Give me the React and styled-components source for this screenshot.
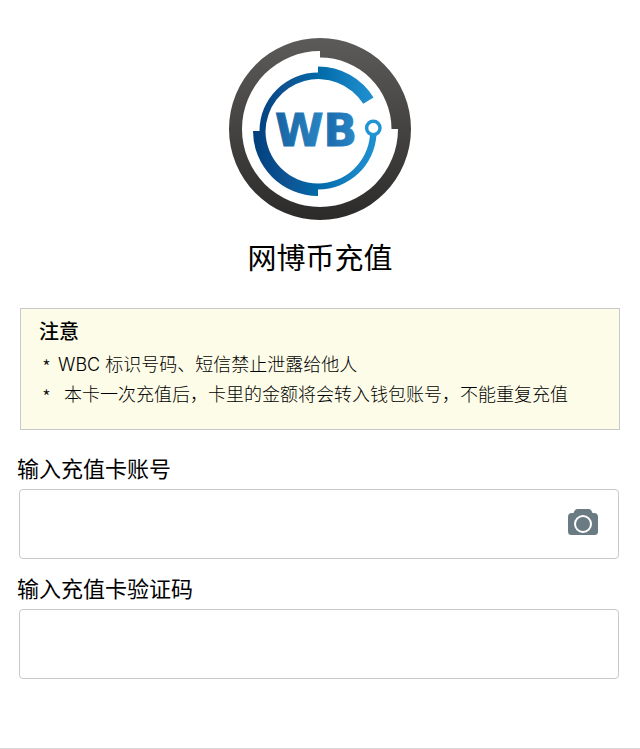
import React from "react";
import styled, { createGlobalStyle } from "styled-components";

const GlobalStyle = createGlobalStyle`
  *, *::before, *::after { box-sizing: border-box; }
  body {
    margin: 0;
    background: #fff;
    color: #000;
    font-family: "Noto Sans CJK SC", sans-serif;
  }
`;

const Page = styled.main`
  display: flex;
  flex-direction: column;
  padding: 38px 0 0;
  min-height: 100vh;
  border-bottom: 1px solid #d9d9d9;
`;

const Header = styled.header`
  display: flex;
  flex-direction: column;
  align-items: center;
  gap: 16px;
`;

const Title = styled.h1`
  margin: 0;
  font-size: 29px;
  line-height: 40px;
  font-weight: 400;
`;

const Notice = styled.section`
  margin: 32px 20px 0;
  padding: 7px 18px 19px;
  background: #fdfce8;
  border: 1px solid #c8c8c8;
`;

const NoticeTitle = styled.h2`
  margin: 0;
  font-size: 20px;
  line-height: 30px;
  font-weight: 500;
`;

const NoticeList = styled.ul`
  margin: 4px 0 0;
  padding: 0 0 0 3px;
  list-style: none;
  font-family: Inter, "Noto Sans CJK SC", sans-serif;
  font-size: 18px;
  line-height: 30px;
  font-weight: 300;
`;

const NoticeItem = styled.li`
  display: flex;
  align-items: flex-start;
  min-height: 30px;
  gap: ${(p) => (p.$wide ? 10 : 4)}px;
`;

const Bullet = styled.span`
  width: 12px;
  height: 30px;
  font-family: "Noto Sans CJK SC", sans-serif;
  font-size: 20px;
  line-height: 34px;
`;

const Form = styled.form`
  display: flex;
  flex-direction: column;
  gap: 13px;
  padding: 22px 21px 60px 19px;
`;

const Field = styled.div`
  display: flex;
  flex-direction: column;
  gap: 7px;
`;

const Label = styled.label`
  margin-left: -2px;
  font-size: 22px;
  line-height: 30px;
`;

const InputBox = styled.div`
  display: flex;
  align-items: center;
  height: 70px;
  background: #fff;
  border: 1px solid #c9c9c9;
  border-radius: 4px;
`;

const Input = styled.input`
  flex: 1;
  min-width: 0;
  height: 100%;
  padding: 0 20px;
  border: 0;
  outline: 0;
  background: transparent;
  font: inherit;
  font-size: 22px;
`;

const CameraButton = styled.button`
  display: flex;
  padding: 0 20px 4px;
  border: 0;
  background: transparent;
  cursor: pointer;
`;

function Logo() {
  return (
    <svg width="182" height="182" viewBox="0 0 182 182" role="img" aria-label="WB">
      <defs>
        <linearGradient id="rim" x1="0" y1="0" x2="0" y2="1">
          <stop offset="0" stopColor="#5c5b5a" />
          <stop offset="1" stopColor="#2c2b2a" />
        </linearGradient>
        <linearGradient id="orbit" gradientUnits="userSpaceOnUse" x1="24" y1="0" x2="153" y2="0">
          <stop offset="0" stopColor="#003f7d" />
          <stop offset="0.27" stopColor="#0f5494" />
          <stop offset="0.5" stopColor="#0069a8" />
          <stop offset="0.85" stopColor="#1c8aca" />
          <stop offset="1" stopColor="#2094d4" />
        </linearGradient>
        <linearGradient id="mark" gradientUnits="userSpaceOnUse" x1="45" y1="0" x2="130" y2="0">
          <stop offset="0" stopColor="#1762a2" />
          <stop offset="0.6" stopColor="#2b87c4" />
          <stop offset="0.66" stopColor="#1c6cae" />
          <stop offset="1" stopColor="#2b8bc9" />
        </linearGradient>
      </defs>
      <path
        fill="url(#rim)"
        fillRule="evenodd"
        d="M91 0a91 91 0 1 1 0 182a91 91 0 1 1 0-182z M91 13A78 78 0 1 0 169 91H162.500A71.500 71.500 0 0 0 91 19.500z"
      />
      <g fill="url(#orbit)">
        <path d="M89 28.500A65 65 0 0 1 144.500 59.500L134.300 65.800A53 53 0 0 0 36.500 93A52.500 52.500 0 0 0 89 145.500A52.500 52.500 0 0 0 141 97H147.500A58.500 58.500 0 0 1 89 151.500V158A65 65 0 0 1 24 93H30.500A58.500 58.500 0 0 1 89 34.500z" />
      </g>
      <circle cx="144.300" cy="90" r="6.700" fill="#fff" stroke="#2094d4" strokeWidth="3.400" />
      <text
        x="87"
        y="108"
        textAnchor="middle"
        fill="url(#mark)"
        stroke="url(#mark)"
        strokeWidth="1"
        fontFamily="DejaVu Sans, sans-serif"
        fontWeight="700"
        fontSize="44"
      >
        WB
      </text>
    </svg>
  );
}

function CameraIcon() {
  return (
    <svg width="30" height="26" viewBox="0 0 30 26" aria-hidden="true">
      <path
        fill="#6b7b83"
        d="M9 0H21Q22.500 0 23.300 1.500L24.500 4H26Q30 4 30 8V22.500Q30 26 26.500 26H3.500Q0 26 0 22.500V8Q0 4 4 4H5.500L6.700 1.500Q7.500 0 9 0z"
      />
      <circle cx="15" cy="15" r="8" fill="none" stroke="#fff" strokeWidth="2" />
    </svg>
  );
}

export default function App() {
  return (
    <>
      <GlobalStyle />
      <Page>
        <Header>
          <Logo />
          <Title>网博币充值</Title>
        </Header>
        <Notice>
          <NoticeTitle>注意</NoticeTitle>
          <NoticeList>
            <NoticeItem>
              <Bullet>*</Bullet>
              <span>WBC 标识号码、短信禁止泄露给他人</span>
            </NoticeItem>
            <NoticeItem $wide>
              <Bullet>*</Bullet>
              <span>本卡一次充值后，卡里的金额将会转入钱包账号，不能重复充值</span>
            </NoticeItem>
          </NoticeList>
        </Notice>
        <Form onSubmit={(e) => e.preventDefault()}>
          <Field>
            <Label htmlFor="card-number">输入充值卡账号</Label>
            <InputBox>
              <Input id="card-number" type="text" />
              <CameraButton type="button" aria-label="扫描充值卡">
                <CameraIcon />
              </CameraButton>
            </InputBox>
          </Field>
          <Field>
            <Label htmlFor="card-code">输入充值卡验证码</Label>
            <InputBox>
              <Input id="card-code" type="text" />
            </InputBox>
          </Field>
        </Form>
      </Page>
    </>
  );
}
